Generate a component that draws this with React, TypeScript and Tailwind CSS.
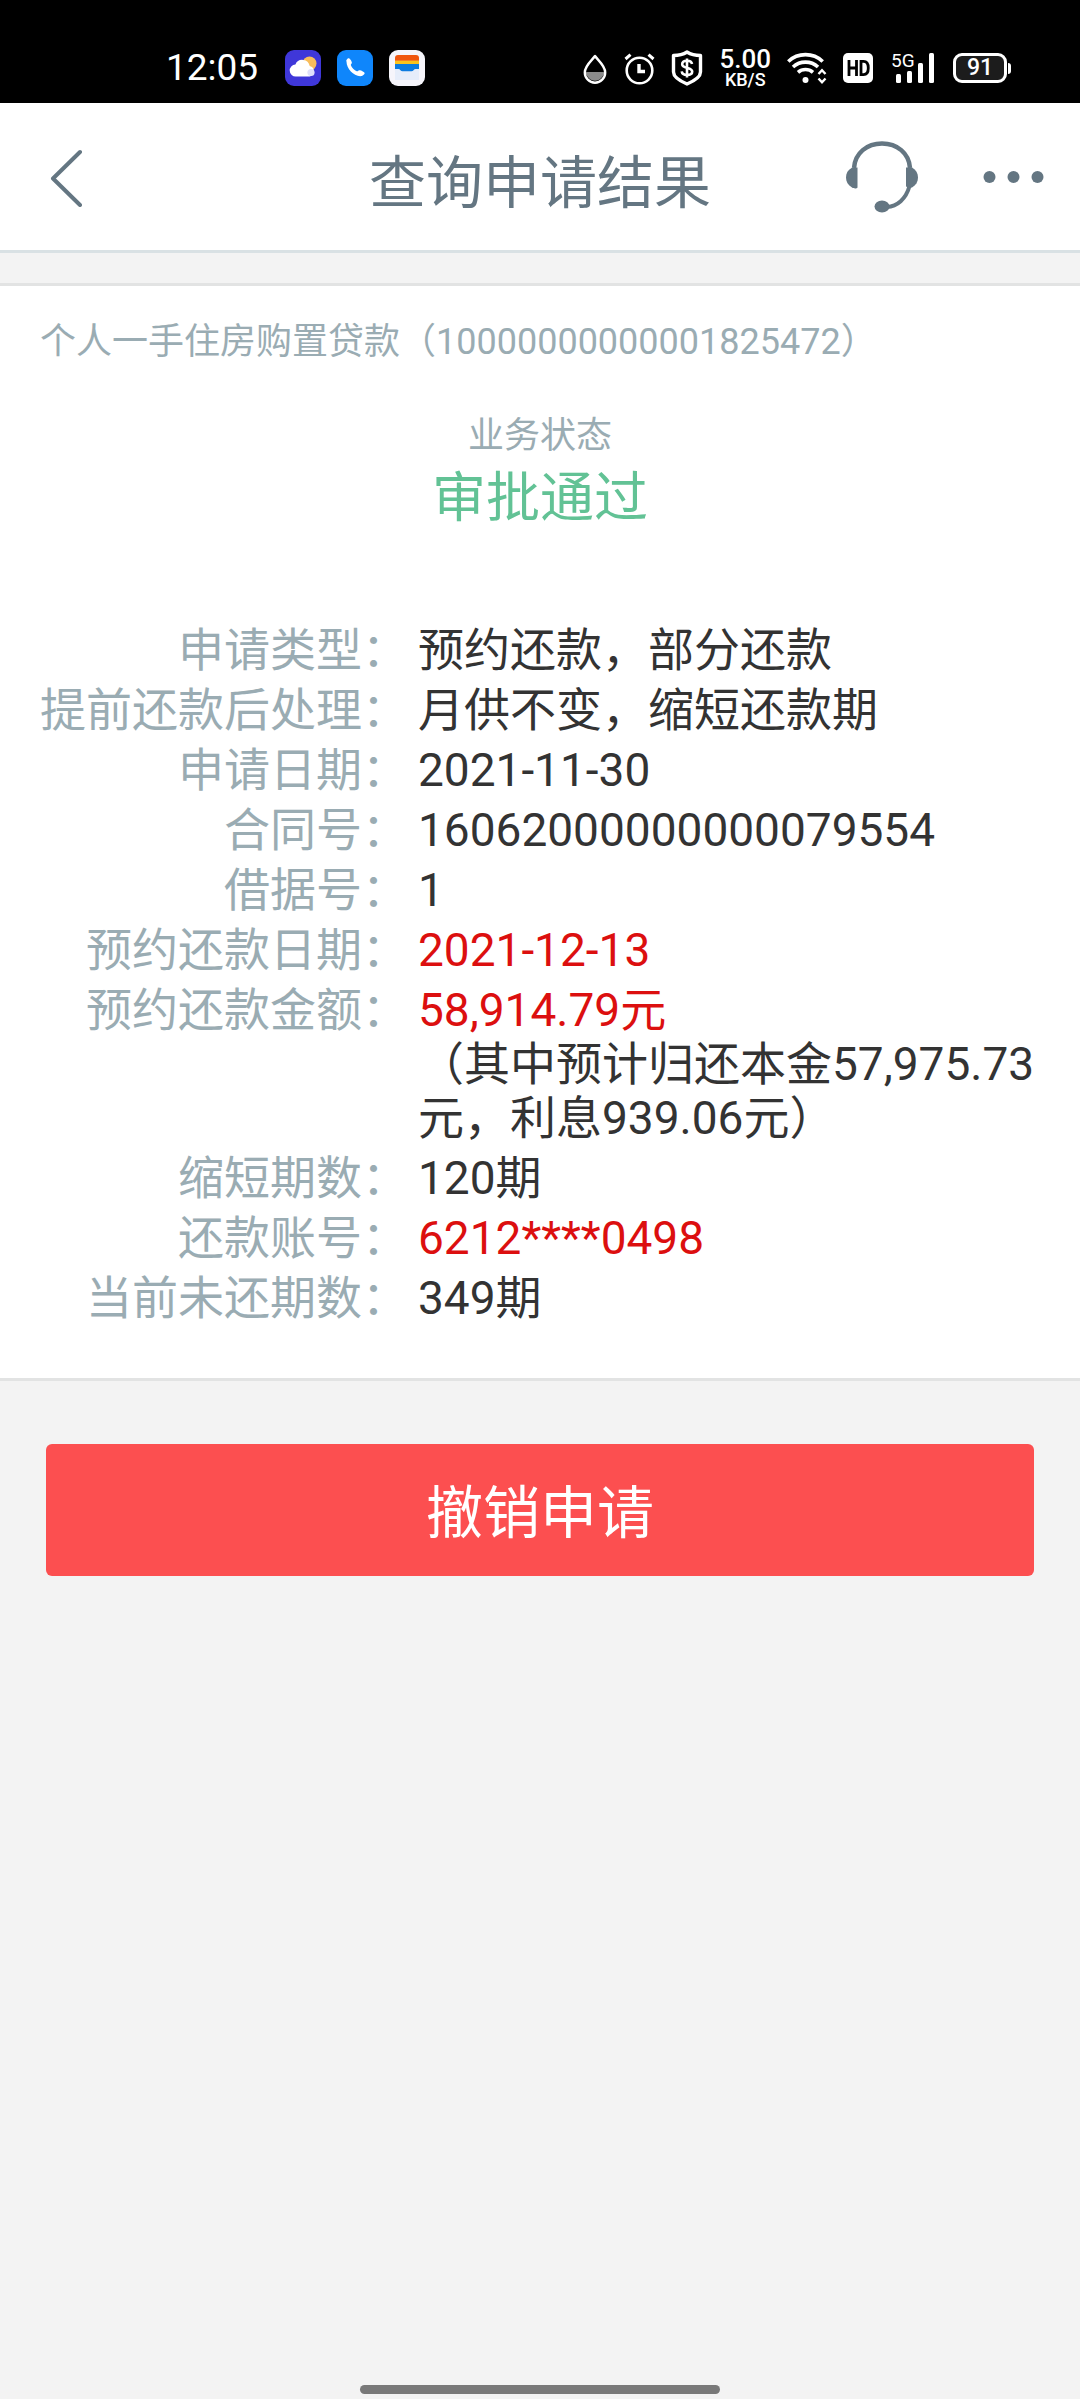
import type { ReactNode } from "react";

type Row = {
    label: string;
    value: string;
    note?: string;
    red?: boolean;
}

const rows: Row[] = [
    { label: "申请类型", value: "预约还款，部分还款" },
    { label: "提前还款后处理", value: "月供不变，缩短还款期" },
    { label: "申请日期", value: "2021-11-30" },
    { label: "合同号", value: "16062000000000079554" },
    { label: "借据号", value: "1" },
    { label: "预约还款日期", value: "2021-12-13", red: true },
    { label: "预约还款金额", value: "58,914.79元", note: "（其中预计归还本金57,975.73元，利息939.06元）", red: true },
    { label: "缩短期数", value: "120期" },
    { label: "还款账号", value: "6212****0498", red: true },
    { label: "当前未还期数", value: "349期" },
];

const AppIcon = ({ children }: { children: ReactNode }) => (
    <svg className="h-9 w-9" viewBox="0 0 36 36" fill="none">{children}</svg>
)

const StatusBar = () => {
    return (
        <div className="flex h-[103px] items-center justify-between bg-black pl-[166px] pr-[69px] pt-[33px] text-white">
            <div className="flex items-center gap-4">
                <span className="mr-[11px] text-[37px] leading-[36px]">12:05</span>
                <AppIcon>
                    <rect width="36" height="36" rx="9" fill="#3f37d9" />
                    <circle cx="24.500" cy="13.500" r="7" fill="#f8bd5c" />
                    <path d="M11 26.500a6 6 0 0 1-.6-12 7.500 7.500 0 0 1 14.300 1.500 5.400 5.400 0 0 1 0 10.500z" fill="#fff" />
                    <circle cx="26" cy="22.500" r="3.600" fill="#dfe0fb" />
                </AppIcon>
                <AppIcon>
                    <rect width="36" height="36" rx="9" fill="#0f86fb" />
                    <path d="M9.500 11.500c-.8-1.500 1.400-3.700 2.600-3.200 1.400.7 3 3.600 2.800 4.800-.2 1-1.300 1.200-1 2.200.7 2.400 3.400 5.100 5.900 6 1 .3 1.500-.8 2.500-1 1.400-.2 4.800 1.500 5.300 2.800.4 1.300-2.300 3.300-4.400 3.200C16.500 26 9.500 18.500 9.500 11.500z" fill="#fff" />
                </AppIcon>
                <AppIcon>
                    <rect width="36" height="36" rx="9" fill="#f6f5fb" />
                    <path d="M6 19h24v11H6z" fill="#e6edfa" />
                    <path d="M6 10V8a3 3 0 0 1 3-3h18a3 3 0 0 1 3 3v2z" fill="#f0560f" />
                    <path d="M6 10h24v4H6z" fill="#fbc31c" />
                    <path d="M6 14h24v5h-3.500c-1.500 0-2.300 2.300-4 2.300h-9c-1.700 0-2.500-2.300-4-2.300H6z" fill="#0c7be0" />
                    <path d="M6 10.500h24" stroke="#f58220" />
                </AppIcon>
            </div>
            <div className="flex items-center">
                <svg className="mr-[17px] h-9 w-6" viewBox="0 0 24 36" fill="none">
                    <path d="M2.500 22h19c-1 4.500-4.500 8.800-9.500 8.800S3.500 26.500 2.500 22z" fill="#8a8a8a" />
                    <path d="M12 6C9 10.500 1.800 15.500 1.800 22.500a10.200 10.200 0 0 0 20.400 0C22.200 15.500 15 10.500 12 6z" stroke="#fff" strokeWidth="2.400" strokeLinejoin="round" />
                </svg>
                <svg className="mr-4 h-9 w-[31px]" viewBox="0 0 31 36" fill="none" stroke="#fff">
                    <circle cx="15.500" cy="20.500" r="12.800" strokeWidth="2.600" />
                    <path d="M1.500 9 6.500 4.600M29.500 9l-5-4.400" strokeWidth="3" />
                    <path d="M15 14v7.500h6" strokeWidth="3.400" />
                </svg>
                <svg className="mr-4 h-9 w-8" viewBox="0 0 32 36" fill="none" stroke="#fff">
                    <path d="M16 2C12 4.500 7 5.500 2.500 5.500L2.500 22c0 5 6 8.800 13.500 12 7.500-3.200 13.500-7 13.500-12V5.500C25 5.500 20 4.500 16 2z" strokeWidth="3.400" strokeLinejoin="round" />
                    <path d="M21 14c-.3-2.200-2.200-3.300-5-3.300s-4.800 1.200-4.800 3.500c0 5 10 2.400 10 7.300 0 2.300-2.200 3.500-5.200 3.500s-5-1.300-5.300-3.600M16 8.500v19" strokeWidth="2.600" />
                </svg>
                <p className="mr-4 pt-[3px] text-center text-[26px] font-medium leading-[18px]">
                    5.00<br /><span className="text-[18px]">KB/S</span>
                </p>
                <svg className="mr-4 h-9 w-10" viewBox="0 0 40 36" fill="none" stroke="#fff" strokeWidth="3.600">
                    <path d="M1.300 11.500a25 25 0 0 1 34.400 0" />
                    <path d="M6 17a18.500 18.500 0 0 1 25 0" />
                    <path d="M11 22.300a11.500 11.500 0 0 1 15 0" />
                    <circle cx="18.500" cy="30" r="3" fill="#fff" stroke="none" />
                    <path d="M31.500 24l3.500-3.800 3.500 3.800M31.500 28.500l3.500 3.800 3.500-3.800" strokeWidth="2.400" />
                </svg>
                <svg className="mr-[18px] h-[30px] w-[30px]" viewBox="0 0 30 30">
                    <rect width="30" height="30" rx="5" fill="#fff" />
                    <path d="M6 7v16M13.500 7v16M6 15h7.500M18 8.400v13.200h2.500c3.500 0 4.800-2.600 4.800-6.600s-1.300-6.600-4.800-6.600z" fill="none" stroke="#000" strokeWidth="2.800" />
                </svg>
                <div className="relative mr-[18px]">
                    <svg className="h-[30px] w-11" viewBox="0 0 44 30" fill="#fff">
                        <rect x="5" y="21" width="5" height="9" rx="1.500" />
                        <rect x="16" y="18" width="5" height="12" rx="1.500" />
                        <rect x="27" y="10" width="5" height="20" rx="1.500" />
                        <rect x="38" y="0" width="5" height="30" rx="1.500" />
                    </svg>
                    <span className="absolute left-0 top-0 text-[19px] leading-[16px]">5G</span>
                </div>
                <div className="flex items-center gap-[1px]">
                    <div className="flex h-[30px] w-[54px] items-center justify-center rounded-[9px] border-[3px] border-white bg-[#1c1c1c] text-[23px] font-medium leading-[24px]">91</div>
                    <div className="h-[11px] w-[3px] rounded-r bg-white"></div>
                </div>
            </div>
        </div>
    )
}

const Header = () => {
    return (
        <header className="flex h-[150px] items-center border-b-[3px] border-[#d9e1e4] bg-white text-[#647682]">
            <div className="flex flex-1">
                <button type="button" aria-label="返回" className="ml-12 cursor-pointer">
                    <svg className="h-[60px] w-9" viewBox="0 0 36 60" fill="none" stroke="currentColor" strokeWidth="4" strokeLinecap="round" strokeLinejoin="round">
                        <path d="M32 5 5 31.500 32 58" />
                    </svg>
                </button>
            </div>
            <h1 className="pt-[14px] text-[57px] leading-[72px]">查询申请结果</h1>
            <div className="flex flex-1 items-center justify-end gap-[65px]">
                <button type="button" aria-label="客服" className="cursor-pointer">
                    <svg className="h-[72px] w-[72px]" viewBox="0 0 72 72" fill="none">
                        <path d="M8 27C9 12 21 2.500 36 2.500S63 12 64 27" stroke="currentColor" strokeWidth="4.500" />
                        <path d="M63.500 45C60 58 51 65.500 41 66" stroke="currentColor" strokeWidth="4" />
                        <path d="M11.500 26.500v20c-1 1.500-4 1-5.500 0C2 44 0 41 0 36.500S2 29 5.500 27z" fill="currentColor" />
                        <path d="M60 26.500h6C70 29 72 32 72 36.500S70 44 66 46.500l-2.500.5-3.500-1.500z" fill="currentColor" />
                        <ellipse cx="36" cy="65.500" rx="7.500" ry="6" fill="currentColor" />
                    </svg>
                </button>
                <button type="button" aria-label="更多" className="mr-9 cursor-pointer">
                    <svg className="h-3 w-[61px]" viewBox="0 0 61 12" fill="currentColor">
                        <circle cx="6.500" cy="6" r="6" />
                        <circle cx="30.500" cy="6" r="6" />
                        <circle cx="54.500" cy="6" r="6" />
                    </svg>
                </button>
            </div>
        </header>
    )
}

const App = () => {
    return (
        <div className="flex min-h-screen flex-col bg-[#f3f3f3] font-['Roboto','Noto_Sans_CJK_SC',sans-serif]">
            <StatusBar />
            <Header />
            <main>
                <section className="mt-[30px] border-y-[3px] border-[#e2e3e3] bg-white px-10 pb-[53px] pt-[29px]">
                    <h2 className="text-[36px] leading-[54px] text-[#9aacb3]">个人一手住房购置贷款（10000000000001825472）</h2>
                    <div className="mt-10 text-center">
                        <p className="text-[36px] leading-[54px] text-[#9aacb3]">业务状态</p>
                        <p className="text-[54px] leading-[72px] text-[#62c295]">审批通过</p>
                    </div>
                    <dl className="mt-[88px] grid grid-cols-[auto_1fr] gap-x-[10px] gap-y-[6px] text-[46px] leading-[54px]">
                        {rows.map((row) => (
                            <div key={row.label} className="contents">
                                <dt className="text-right text-[#9aacb3]">{row.label}：</dt>
                                <dd className="text-[#333]">
                                    <span className={row.red ? "text-[#dc0f0f]" : ""}>{row.value}</span>
                                    {row.note && <p>{row.note}</p>}
                                </dd>
                            </div>
                        ))}
                    </dl>
                </section>
                <div className="px-[46px] pt-[63px]">
                    <button type="button" className="h-[132px] w-full cursor-pointer rounded-md bg-[#fc4f50] pt-[7px] text-[57px] leading-[72px] text-white">撤销申请</button>
                </div>
            </main>
            <div className="mx-auto mb-[5px] mt-auto h-[9px] w-1/3 rounded-full bg-[#797979]"></div>
        </div>
    )
}

export default App;
